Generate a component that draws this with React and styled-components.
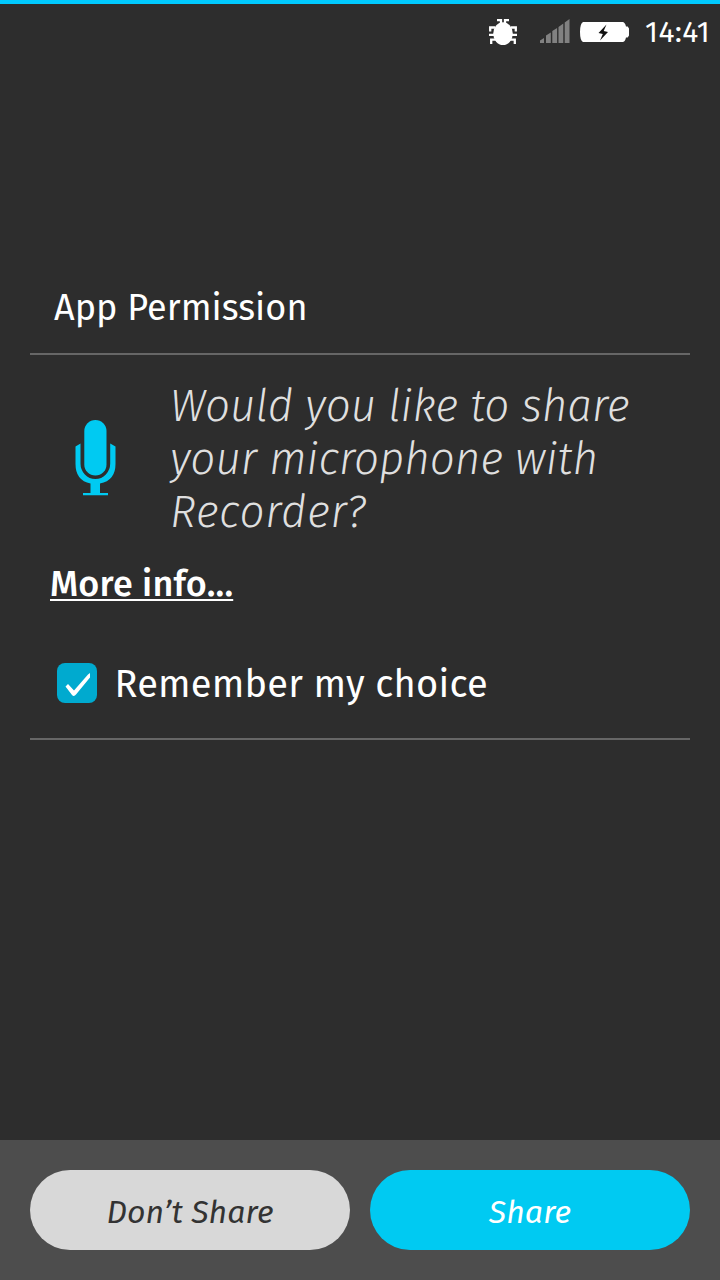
import React from 'react';
import styled, { createGlobalStyle } from 'styled-components';

const GlobalStyle = createGlobalStyle`
  * { box-sizing: border-box; }
  body { margin: 0; background: #2d2d2d; }
  button { border: 0; margin: 0; padding: 0; font-family: inherit; }
`;

const Screen = styled.div`
  display: flex;
  flex-direction: column;
  width: 720px;
  height: 1280px;
  overflow: hidden;
  background: #2d2d2d;
  border-top: 4px solid #00caff;
  color: #fff;
  font-family: 'Fira Sans', 'Noto Sans', sans-serif;
`;

const StatusBar = styled.header`
  display: flex;
  align-items: center;
  justify-content: flex-end;
  height: 56px;
  padding-right: 10px;
  svg { display: block; flex: none; }
`;

const BugIcon = styled.svg`
  margin-right: 22px;
`;

const SignalIcon = styled.svg`
  margin-right: 10px;
`;

const Clock = styled.time`
  width: 65px;
  margin-left: 15px;
  font-size: 30px;
  line-height: 56px;
  letter-spacing: 0.4px;
  white-space: nowrap;
`;

const Dialog = styled.main`
  flex: 1;
  display: flex;
  flex-direction: column;
  padding: 200px 30px 0;
`;

const Title = styled.h1`
  height: 95px;
  margin: 0;
  padding: 24px 24px 0;
  border-bottom: 2px solid #666;
  font-size: 36px;
  font-weight: 400;
  line-height: 48px;
  letter-spacing: 0.05px;
  white-space: nowrap;
`;

const Request = styled.section`
  display: flex;
  height: 184px;
  padding: 25px 0 0 45px;
`;

const MicIcon = styled.svg`
  display: block;
  flex: none;
  margin: 39px 54px 0 0;
`;

const Question = styled.p`
  margin: 0;
  color: #dfdfdf;
  font-size: 44px;
  font-style: italic;
  font-weight: 300;
  line-height: 53px;
  white-space: nowrap;
`;

const Line = styled.span`
  display: block;
  letter-spacing: ${(p) => p.$spacing || 0}px;
`;

const MoreInfo = styled.a`
  align-self: flex-start;
  height: 61px;
  margin: 21px 0 0 20px;
  color: #fff;
  font-size: 36px;
  font-weight: 500;
  line-height: 48px;
  letter-spacing: 0.2px;
  white-space: nowrap;
  text-decoration: underline;
  text-decoration-thickness: 2px;
  text-underline-offset: 3px;
  text-decoration-skip-ink: none;
`;

const Remember = styled.label`
  display: flex;
  align-items: center;
  height: 119px;
  padding: 9px 0 0 26px;
  border-bottom: 2px solid #666;
  font-size: 38px;
  line-height: 50px;
  letter-spacing: 0.22px;
  white-space: nowrap;
`;

const Checkbox = styled.span`
  display: block;
  flex: none;
  width: 40px;
  height: 40px;
  margin: -3px 18px 0 0.5px;
  border-radius: 8px;
  background: #00aacf;
  svg { display: block; }
`;

const Actions = styled.footer`
  display: flex;
  gap: 20px;
  height: 140px;
  padding: 30px;
  background: #4d4d4d;
`;

const Button = styled.button`
  flex: 1;
  height: 80px;
  padding-top: 4px;
  border-radius: 40px;
  background: ${(p) => (p.$primary ? '#00caf2' : '#d8d8d8')};
  color: ${(p) => (p.$primary ? '#fff' : '#333')};
  font-size: 32px;
  font-style: italic;
  letter-spacing: 0.1px;
`;

export default function App() {
  return (
    <Screen>
      <GlobalStyle />
      <StatusBar>
        <BugIcon width="30" height="28" viewBox="0 0 30 28">
          <ellipse cx="15" cy="15.600" rx="9.800" ry="11.400" fill="#fff" />
          <path
            d="M9 2.200h4v4M21 2.200h-4v4M2.200 13.500v-4h5M27.800 13.500v-4h-5M1 16.800h28M3.200 26v-4.300h5M26.800 26v-4.300h-5"
            fill="none"
            stroke="#fff"
            strokeWidth="2.300"
          />
        </BugIcon>
        <SignalIcon width="30" height="28" viewBox="0 0 30 28" fill="#818181">
          <path d="M0 25v-2.500l4-2.500v5zM6 25v-7.500l4.800-3V25zM12.300 25V13l4.800-3v15zM18.500 25V9l4.800-3.500V25zM24.700 25V4.500L29.500 1v24z" />
        </SignalIcon>
        <svg width="50" height="28" viewBox="0 0 50 28">
          <path
            d="M3 4h39.500q2.500 0 3.500 4.500h1.700L49 10.500v7l-1.300 2H46q-1 4.500-3.500 4.500H3Q0 22.500 0 14T3 4z"
            fill="#fff"
          />
          <path d="M26.500 6.500 18.500 15l4.300 1L20 22.500l8-8.500-4.300-1z" fill="#111" />
        </svg>
        <Clock>14:41</Clock>
      </StatusBar>
      <Dialog>
        <Title>App Permission</Title>
        <Request>
          <MicIcon width="41" height="77" viewBox="0 0 41 77">
            <rect x="9.300" y="1" width="22.200" height="55.500" rx="11.100" fill="#00caf2" />
            <path
              d="M.5 27.500 5.500 24.500V44.500a14.850 15.500 0 0 0 29.700 0V24.500L40.500 27.500V45q0 16.500-15.500 19.500V74H33v2.200H8V74h7.500V64.500Q.5 61.500.5 45z"
              fill="#00caf2"
            />
          </MicIcon>
          <Question>
            <Line>Would you like to share</Line>
            <Line>your microphone with</Line>
            <Line $spacing={0.75}>Recorder?</Line>
          </Question>
        </Request>
        <MoreInfo>More info...</MoreInfo>
        <Remember>
          <Checkbox>
            <svg width="40" height="40" viewBox="0 0 40 40">
              <path d="M8.500 23.500 11 21 17 27.500 31 11.500 33 10V14.500L19 31.500Q17 34 15 32z" fill="#fff" />
            </svg>
          </Checkbox>
          Remember my choice
        </Remember>
      </Dialog>
      <Actions>
        <Button>Don’t Share</Button>
        <Button $primary>Share</Button>
      </Actions>
    </Screen>
  );
}
